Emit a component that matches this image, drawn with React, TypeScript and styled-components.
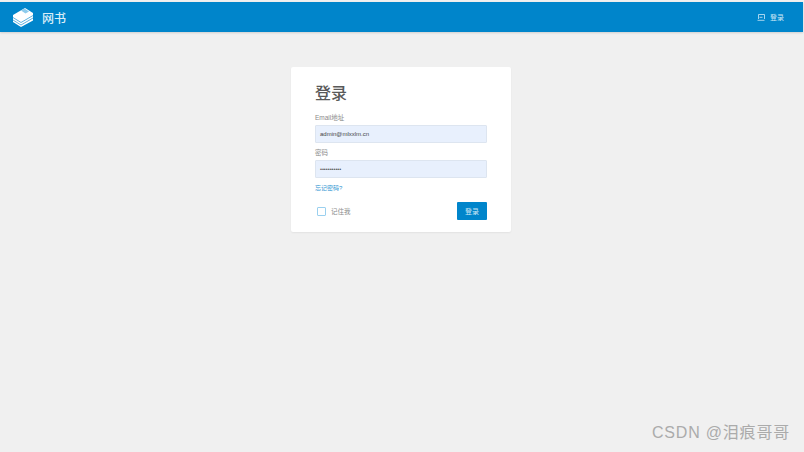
import React from 'react';
import styled, { createGlobalStyle } from 'styled-components';

const GlobalStyle = createGlobalStyle`
  html, body {
    margin: 0;
    padding: 0;
    height: 100%;
    background: #f0f0f0;
    font-family: "Liberation Sans", "Noto Sans CJK SC", sans-serif;
  }
  #root {
    height: 100%;
  }
`;

const Page = styled.div`
  position: relative;
  width: 804px;
  height: 452px;
  overflow: hidden;
  box-sizing: border-box;
  padding-top: 2px;
  background: #f0f0f0;
`;

const NavBar = styled.header`
  display: flex;
  align-items: center;
  justify-content: space-between;
  height: 30px;
  box-sizing: border-box;
  margin-right: 1px;
  padding: 0 19px 0 12px;
  background: #0085cb;
  box-shadow: 0 1px 2px rgba(0, 0, 0, 0.14);
  color: #fff;
`;

const Brand = styled.div`
  display: flex;
  align-items: center;
  gap: 8px;
  font-size: 12px;
  font-weight: 500;
  color: #d9edf8;
`;

const NavLogin = styled.div`
  display: flex;
  align-items: center;
  gap: 5px;
  font-size: 7px;
  color: #cfe8f6;
`;

const Main = styled.main`
  display: flex;
  justify-content: center;
  padding-top: 35px;
  padding-right: 2px;
`;

const Card = styled.form`
  display: flex;
  flex-direction: column;
  width: 220px;
  height: 165px;
  box-sizing: border-box;
  padding: 15px 24px 0;
  background: #fff;
  border-radius: 2px;
  box-shadow: 0 1px 2px rgba(0, 0, 0, 0.06);
`;

const Title = styled.h1`
  margin: 0 0 8px;
  height: 24px;
  line-height: 24px;
  font-size: 16px;
  font-weight: 500;
  color: #595959;
`;

const Field = styled.div`
  display: flex;
  flex-direction: column;
  gap: 3px;

  & + & {
    margin-top: 6px;
  }
`;

const Label = styled.label`
  height: 8px;
  line-height: 8px;
  font-size: 6.5px;
  color: #8a8a8a;
`;

const Input = styled.div`
  display: flex;
  align-items: center;
  height: 18px;
  box-sizing: border-box;
  padding: 0 4px;
  background: #e8f0fd;
  border: 1px solid #dde5f0;
  border-radius: 1px;
  font-size: 6px;
  color: #444;
`;

const PasswordDots = styled.span`
  font-size: 5.5px;
  color: #555;
`;

const Forgot = styled.a`
  margin-top: 5px;
  height: 10px;
  line-height: 10px;
  font-size: 6px;
  color: #2f95d2;
`;

const Actions = styled.div`
  display: flex;
  align-items: center;
  justify-content: space-between;
  margin-top: 9px;
`;

const Remember = styled.div`
  display: flex;
  align-items: center;
  gap: 5px;
  padding-left: 2px;
  font-size: 6.5px;
  color: #8a8a8a;
`;

const CheckBox = styled.span`
  width: 9px;
  height: 9px;
  box-sizing: border-box;
  background: #fff;
  border: 1.5px solid #9ad0ef;
  border-radius: 1px;
`;

const SubmitButton = styled.button`
  width: 30px;
  height: 18px;
  padding: 0;
  background: #0085cb;
  border: none;
  border-radius: 1px;
  font-family: inherit;
  font-size: 7px;
  color: #cfe8f6;
`;

const Watermark = styled.div`
  position: absolute;
  right: 14px;
  bottom: 9px;
  font-size: 16px;
  line-height: 20px;
  letter-spacing: 0.8px;
  color: #ababab;
`;

const BookLogo = () => (
  <svg width="22" height="20" viewBox="0 0 22 20" aria-hidden="true">
    <path d="M1 8 13 1l8 5v7.500L9 20l-8-5z" fill="#fff" />
    <path d="M1 10.500 9 15.500l12-7M1 13 9 18l12-7" fill="none" stroke="#5fb3e0" strokeWidth="1" />
    <path d="M9 3.500 12.500 1.500 17 4.500 13.500 6.500z" fill="#8ecbec" />
  </svg>
);

const LoginIcon = () => (
  <svg width="8" height="7" viewBox="0 0 8 7" fill="none" stroke="#cfe8f6" strokeWidth="0.8" aria-hidden="true">
    <path d="M1.500 5V0.500h6V5" />
    <path d="M0.500 6.300h7" />
    <path d="M2.500 3.300h3" />
  </svg>
);

const App = () => {
  return (
    <Page>
      <GlobalStyle />
      <NavBar>
        <Brand>
          <BookLogo />
          网书
        </Brand>
        <NavLogin>
          <LoginIcon />
          登录
        </NavLogin>
      </NavBar>
      <Main>
        <Card>
          <Title>登录</Title>
          <Field>
            <Label>Email地址</Label>
            <Input>admin@mlxxlm.cn</Input>
          </Field>
          <Field>
            <Label>密码</Label>
            <Input>
              <PasswordDots>•••••••••••</PasswordDots>
            </Input>
          </Field>
          <Forgot>忘记密码?</Forgot>
          <Actions>
            <Remember>
              <CheckBox />
              记住我
            </Remember>
            <SubmitButton type="button">登录</SubmitButton>
          </Actions>
        </Card>
      </Main>
      <Watermark>CSDN @泪痕哥哥</Watermark>
    </Page>
  );
};

export default App;
